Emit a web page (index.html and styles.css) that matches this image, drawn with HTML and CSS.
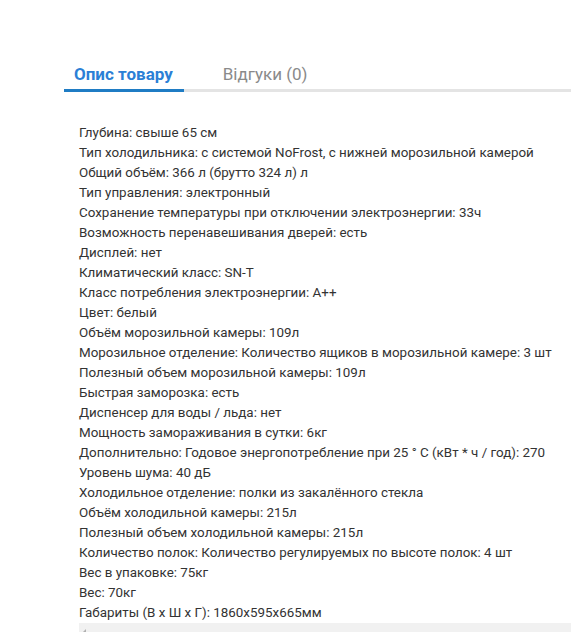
FILE: index.html
```
<!DOCTYPE html>
<html lang="uk">
<head>
<meta charset="utf-8">
<link rel="stylesheet" href="styles.css">
</head>
<body>
<div class="page">
  <div class="tabs">
    <div class="tab active">Опис товару</div>
    <div class="tab">Відгуки (0)</div>
  </div>
  <div class="desc">
    <div class="line">Глубина: свыше 65 см</div>
    <div class="line">Тип холодильника: с системой NoFrost, с нижней морозильной камерой</div>
    <div class="line">Общий объём: 366 л (брутто 324 л) л</div>
    <div class="line">Тип управления: электронный</div>
    <div class="line">Сохранение температуры при отключении электроэнергии: 33ч</div>
    <div class="line">Возможность перенавешивания дверей: есть</div>
    <div class="line">Дисплей: нет</div>
    <div class="line">Климатический класс: SN-T</div>
    <div class="line">Класс потребления электроэнергии: A++</div>
    <div class="line">Цвет: белый</div>
    <div class="line">Объём морозильной камеры: 109л</div>
    <div class="line">Морозильное отделение: Количество ящиков в морозильной камере: 3 шт</div>
    <div class="line">Полезный объем морозильной камеры: 109л</div>
    <div class="line">Быстрая заморозка: есть</div>
    <div class="line">Диспенсер для воды / льда: нет</div>
    <div class="line">Мощность замораживания в сутки: 6кг</div>
    <div class="line">Дополнительно: Годовое энергопотребление при 25 ° C (кВт * ч / год): 270</div>
    <div class="line">Уровень шума: 40 дБ</div>
    <div class="line">Холодильное отделение: полки из закалённого стекла</div>
    <div class="line">Объём холодильной камеры: 215л</div>
    <div class="line">Полезный объем холодильной камеры: 215л</div>
    <div class="line">Количество полок: Количество регулируемых по высоте полок: 4 шт</div>
    <div class="line">Вес в упаковке: 75кг</div>
    <div class="line">Вес: 70кг</div>
    <div class="line">Габариты (В x Ш x Г): 1860x595x665мм</div>
    <div class="scrollbar"><span class="arrow"></span></div>
  </div>
</div>
</body>
</html>
```
FILE: styles.css
```
html, body {
  margin: 0;
  padding: 0;
  background: #fff;
}
.page {
  padding: 64px 0 0 64px;
  font-family: Roboto, "Noto Sans", sans-serif;
  color: #333;
}
.tabs {
  display: flex;
  gap: 29px;
  border-bottom: 3px solid #e4e4e4;
}
.tab {
  padding: 0 11px 5px 10px;
  font-size: 17px;
  line-height: 20px;
  color: #8a8a8a;
  margin-bottom: -3px;
  border-bottom: 3px solid transparent;
}
.tab.active {
  color: #2b7fd6;
  font-weight: bold;
  border-bottom-color: #1f7cc4;
}
.desc {
  padding: 30px 0 0 15px;
}
.line {
  font-size: 13.4px;
  line-height: 20px;
  padding-top: 1px;
  margin-bottom: -1px;
  white-space: nowrap;
}
.scrollbar {
  height: 14px;
  margin-top: 1px;
  background: #f1f1f1;
  display: flex;
  align-items: center;
  padding-left: 4px;
}
.arrow {
  width: 0;
  height: 0;
  border-top: 3px solid transparent;
  border-bottom: 3px solid transparent;
  border-right: 3px solid #b0b0b0;
  margin-top: 4px;
}
```
